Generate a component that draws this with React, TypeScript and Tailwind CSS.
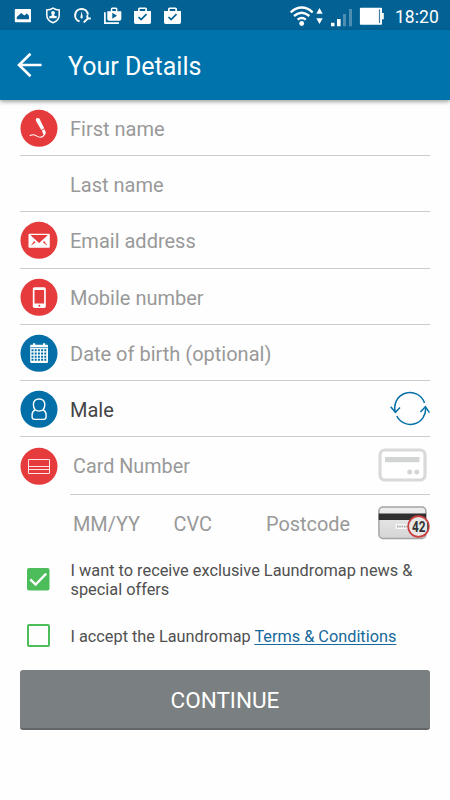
import type { ReactNode } from "react";

function StatusBar() {
  return (
    <div className="flex h-[30px] items-center bg-[#036293] pr-[11px] pl-[14px] text-white">
      <svg width="172" height="30" viewBox="14 0 172 30" fill="none">
        <path fill="#fff" fillRule="evenodd" d="M15.600 9h14.600q.8 0 .8.8v11.600q0 .8-.8.8H15.600q-.8 0-.8-.8V9.800q0-.8.800-.8ZM16.800 19.200h12.200v-3.400l-2.200-2.300-2.400 2-3.200-2.600-4.400 4Z" />
        <path stroke="#fff" strokeWidth="1.500" d="M53 8.200c2 1.500 4 1.900 6.200 1.900v5.200c0 3.600-2.900 6.200-6.200 7.500-3.300-1.300-6.200-3.900-6.200-7.500v-5.200c2.200 0 4.200-.4 6.200-1.900Z" />
        <circle cx="53" cy="12.800" r="1.900" fill="#fff" />
        <path fill="#fff" d="M52 14h2l.4 1.700 2.300.5v2h-7.400v-2l2.300-.5Z" />
        <path stroke="#fff" strokeWidth="2" d="M79.600 21.400A6.400 6.400 0 1 1 87.900 14.600" />
        <path fill="#fff" d="m81.700 11.200 1.100 6q-.2 1.600-1.700 1.200-.9-.4-.6-1.600Z" />
        <path stroke="#fff" strokeWidth="2" strokeLinecap="round" d="m84.300 21.900 3.400-3.300M87.300 15.900q-.4 3 2.700 2.500" />
        <path stroke="#fff" strokeWidth="1.700" d="M104.900 12.200v11h14" />
        <path fill="#fff" fillRule="evenodd" d="M107.300 11.200h3.500V9q0-1.500 1.500-1.500h3.600q1.500 0 1.500 1.500v2.200h3.900V19q0 1.800-1.800 1.800h-10.400q-1.800 0-1.800-1.800Zm5-2.200v2h3.600V9Zm0 3.800v6l4.700-3Z" />
        {[133.500, 163.500].map((x) => (
          <g key={x} transform={`translate(${x} 7)`}>
            <path fill="#fff" fillRule="evenodd" d="M.5 4h4V2q0-1.500 1.500-1.500h6q1.500 0 1.500 1.500v2h4v11.300q0 1.700-1.700 1.700H2.200Q.5 17 .5 15.300Zm5.700-2v2h5.600V2Z" />
            <path d="m5 10 2.600 2.600L13 7.200" stroke="#036293" strokeWidth="1.700" />
          </g>
        ))}
      </svg>
      <svg className="ml-auto" width="98" height="30" viewBox="290 0 98 30" fill="none">
        <path stroke="#fff" strokeWidth="2.300" d="M291.700 12.300q11-9.500 22 0M295 16q7.700-6.500 15.400 0M298.600 19.600q4.100-3.200 8.200 0" />
        <circle cx="302.700" cy="23.500" r="2.400" fill="#fff" />
        <path fill="#fff" d="m320.500 8 3.200 5.700h-6.400Zm0 16 3.200-5.700h-6.400Z" />
        <path fill="#fff" d="M332 22.800h3.500v3.400H332ZM338 19h3.600v7.200H338Z" />
        <path fill="#4d8eb2" d="M344 14h3v12.200h-3ZM350 9h3v17.200h-3Z" />
        <path fill="#fff" d="M361.700 7.700h20.500q.8 0 .8.800v4.500h1.800v6.300H383v4.600q0 .8-.8.800h-20.500q-.8 0-.8-.8V8.500q0-.8.800-.8Z" />
        <path stroke="#427f9f" strokeWidth="1.200" d="M380.500 9.500v13.600" />
      </svg>
      <span className="mt-[5px] ml-[8px] text-[17.500px] leading-none tracking-[0.1px]">18:20</span>
    </div>
  );
}

function Header() {
  return (
    <header className="relative flex h-[70px] items-center bg-[#0072ac] pl-[17px] text-white shadow-[0_2px_4px_rgba(0,0,0,0.35)]">
      <svg width="26" height="26" viewBox="0 0 26 26" fill="none" stroke="#fff" strokeWidth="2.600">
        <path d="M24.600 13H2M13.500 1.700 2 13l11.500 11.300" />
      </svg>
      <h1 className="mt-[3px] ml-[25px] text-[25px] leading-none">Your Details</h1>
    </header>
  );
}

function Badge({ blue, children }: { blue?: boolean; children: ReactNode }) {
  return (
    <svg className="block" width="38" height="38" viewBox="-.5 -.8 38 38" fill="none">
      <circle cx="18.500" cy="18.500" r="18.500" fill={blue ? "#036fa8" : "#e53b3d"} />
      {children}
    </svg>
  );
}

function Field({ label, icon, dark, end }: { label: string; icon?: ReactNode; dark?: boolean; end?: ReactNode }) {
  return (
    <div className="flex h-[56.200px] items-center border-b border-[#c9cdce]">
      <div className="w-[50px] shrink-0 pt-px">{icon}</div>
      <span className={`mt-[3px] text-[20px] leading-none ${dark ? "text-[#444]" : "text-[#999]"}`}>{label}</span>
      {end && <div className="ml-auto">{end}</div>}
    </div>
  );
}

const pen = (
  <Badge>
    <path fill="#fff" d="M15.600 8.800q1.900-1.500 3.400.2l4.700 9.400-2.900 1.700-5-8.300q-1-1.600-.2-3Z" />
    <path fill="#fff" d="m21.400 20.800 2.600-1.400q1.800 2.700 1 4.500-.7 1.100-2.100.7Z" />
    <path stroke="#fff" strokeWidth="1.100" strokeLinecap="round" d="M9.700 25.700c5-2.700 6 1.900 10 1.700q3.200-.3 4.700-3.500" />
  </Badge>
);
const mail = (
  <Badge>
    <rect x="8" y="12" width="21.300" height="14" rx="1" fill="#fff" />
    <path fill="#e53b3d" d="m10.200 13.600 8.400 7.600 8.400-7.600-1-.4H11.200Z" />
    <path fill="#e53b3d" d="m10.200 24.200 3.400-5 1.400 1.300Zm16.900 0-3.400-5-1.400 1.300Z" />
  </Badge>
);
const phone = (
  <Badge>
    <rect x="12.300" y="8.500" width="13" height="20.600" rx="1.700" fill="#fff" />
    <path fill="#e53b3d" d="M14 11.200h9.600v13.500H14Z" />
    <circle cx="18.800" cy="26.900" r="1" fill="#e53b3d" />
  </Badge>
);
const calendar = (
  <Badge blue>
    <path fill="#fff" d="M10.500 10h2V8.500h2.200V10h7.800V8.500h2.200V10h2q.8 0 .8.8v16.500q0 .8-.8.800H10.500q-.8 0-.8-.8V10.800q0-.8.800-.8Z" />
    <path stroke="#036fa8" strokeWidth=".7" d="M10 12.800h17.200" />
    {[15, 18.200, 21.400, 24.500].map((y) => (
      <path key={y} stroke="#036fa8" strokeWidth="1.900" strokeDasharray="2 1.200" d={`M11 ${y + 0.500}h15.300`} />
    ))}
  </Badge>
);
const person = (
  <Badge blue>
    <path stroke="#fff" strokeWidth="1.400" d="M14.600 19q-1.700-2.100-1.700-5 0-5.800 5.700-5.800t5.700 5.800q0 2.900-1.700 5c-2 1.700-6 1.700-8 0Zm0 0q-3 1.600-3 5v2.300q0 2.300 2.500 2.300h9q2.500 0 2.500-2.300V24q0-3.400-3-5" />
  </Badge>
);
const card = (
  <Badge>
    <path stroke="#ffe4e4" strokeWidth="1" d="M8 11.700h21v14H8Zm0 7h21M8 21.700h21" />
  </Badge>
);

const swap = (
  <svg className="block" width="40" height="36" viewBox="390 391 40 36" fill="none" stroke="#0670a8" strokeWidth="1.500">
    <path d="M395.500 412.500a15 15 0 0 1 29-9.500M425.500 407.500a15.200 15.200 0 0 1-28.700 8.500" />
    <path d="m390.700 406.800 4.700 5.500 4.600-4.700M420.400 412l5-5.200 4 5.800" />
  </svg>
);

function CardOutline() {
  return (
    <svg className="block" width="52" height="34" viewBox="0 0 52 34">
      <rect x="2" y="2" width="45" height="30" rx="5" fill="#fff" stroke="#d8dada" strokeWidth="3.200" />
      <path fill="#d3d5d5" d="M7 9h34.500v5.300H7Z" />
      <circle cx="31.700" cy="24" r="2.500" fill="#d3d5d5" />
      <circle cx="38.800" cy="24" r="2.500" fill="#d3d5d5" />
    </svg>
  );
}

function CvcCard() {
  return (
    <svg className="block" width="54" height="36" viewBox="0 0 54 36">
      <defs>
        <linearGradient id="face" x2="0" y2="1">
          <stop stopColor="#eee" /><stop offset="1" stopColor="#d5d5d5" />
        </linearGradient>
        <clipPath id="lens"><circle cx="40.500" cy="21.500" r="10" /></clipPath>
      </defs>
      <rect x=".9" y="2" width="47" height="31.500" rx="4" fill="url(#face)" stroke="#a4a4a4" strokeWidth="1.500" />
      <path fill="#303030" d="M.7 8.500h47.400V15H.7Z" />
      <path fill="#f8f8f8" d="M17.500 19h14v5h-14Z" />
      <path stroke="#aaa" strokeWidth="2" strokeDasharray="1.500 .8" d="M19 21.400h12" />
      <circle cx="40.500" cy="21.500" r="10.300" fill="#e8e8e8" stroke="#cb3e3d" strokeWidth="1.700" />
      <g clipPath="url(#lens)">
        <text x="34" y="26.700" fontSize="14" fontWeight="700" fill="#333" textLength="13.500" lengthAdjust="spacingAndGlyphs">42</text>
        <path stroke="#333" strokeWidth="1.500" d="M50 18v7" />
      </g>
    </svg>
  );
}

export default function App() {
  return (
    <main className="h-[800px] w-[450px] overflow-hidden bg-[#fefefe] font-['Roboto',sans-serif]">
      <StatusBar />
      <Header />
      <form className="px-[20px]">
        <Field label="First name" icon={pen} />
        <Field label="Last name" />
        <Field label="Email address" icon={mail} />
        <Field label="Mobile number" icon={phone} />
        <Field label="Date of birth (optional)" icon={calendar} />
        <Field label="Male" icon={person} dark end={swap} />
        <div className="flex h-[57.500px]">
          <div className="w-[50px] shrink-0 pt-[9.500px]">{card}</div>
          <div className="flex flex-1 items-center justify-between border-b border-[#c9cdce] pl-[3px]">
            <span className="mt-[3px] text-[19.800px] leading-none text-[#999]">Card Number</span>
            <CardOutline />
          </div>
        </div>
        <div className="flex h-[58px] items-center pt-px pl-[53px] text-[19.900px] leading-none text-[#999]">
          <span className="w-[100.500px] pt-px">MM/YY</span>
          <span className="w-[92.500px] pt-px">CVC</span>
          <span className="pt-px">Postcode</span>
          <div className="-mr-[2px] -mt-[3px] ml-auto"><CvcCard /></div>
        </div>
        <div className="flex h-[54px] items-center text-[16.330px] leading-[19px] text-[#505050]">
          <div className="w-[50px] shrink-0 pl-[7px]">
            <svg className="block" width="23" height="23" viewBox="0 0 23 23" fill="none">
              <rect width="22.500" height="22.500" rx="2" fill="#4cbd5a" />
              <path d="m3.300 11.300 5.300 5.200L19.200 5.700" stroke="#fff" strokeWidth="2.400" />
            </svg>
          </div>
          <p className="pt-px pl-[.5px] whitespace-nowrap">I want to receive exclusive Laundromap news &amp;<br />special offers</p>
        </div>
        <div className="flex h-[58px] items-center text-[16.300px] leading-[19px] text-[#505050]">
          <div className="w-[50px] shrink-0 pl-[7px]">
            <div className="size-[22.500px] rounded-[2px] border-2 border-[#4cbd5a]" />
          </div>
          <p className="pt-[2px] pl-[.5px] whitespace-nowrap">I accept the Laundromap <a className="text-[#16699b] underline underline-offset-2">Terms &amp; Conditions</a></p>
        </div>
        <button type="button" className="mt-[5px] block h-[60px] w-full rounded-[3px] border-b-2 border-[#626668] bg-[#7a7f81] pt-[3px] text-[22.500px] leading-none text-white">CONTINUE</button>
      </form>
    </main>
  );
}
